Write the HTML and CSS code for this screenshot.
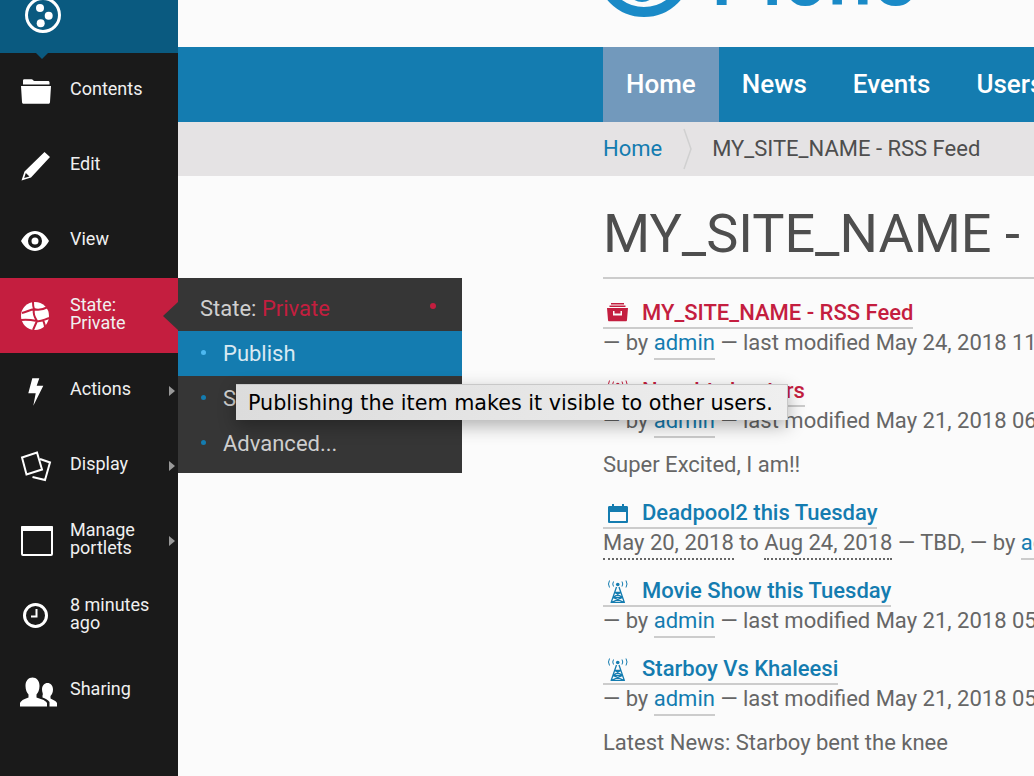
FILE: index.html
```html
<!DOCTYPE html>
<html lang="en">
<head>
    <meta charset="UTF-8">
    <meta name="viewport" content="width=device-width, initial-scale=1.0">
    <title>MY_SITE_NAME - RSS Feed</title>
    <link rel="stylesheet" href="styles.css">
</head>
<body>

<aside class="toolbar">
    <div class="toolbar-logo">
        <svg width="36" height="36" viewBox="0 0 36 36">
            <circle cx="18" cy="15" r="16.500" fill="none" stroke="#fff" stroke-width="3"/>
            <circle cx="15" cy="8" r="4" fill="#fff"/>
            <circle cx="23.700" cy="15.700" r="4" fill="#fff"/>
            <circle cx="15.700" cy="23.300" r="4" fill="#fff"/>
        </svg>
    </div>
    <a class="tool">
        <svg class="tool-icon" viewBox="0 0 32 32"><path d="M3 9.500V5.700C3 4.800 3.700 4.300 4.500 4.300H11.500C12.800 4.300 13.200 6 14.500 6H28C29 6 29.500 6.600 29.500 7.500V9.500ZM1 11H31L30 27C30 28 29.400 28.800 28.300 28.800H3.700C2.600 28.800 2 28 2 27Z" fill="#fff"/></svg>
        <span>Contents</span>
    </a>
    <a class="tool">
        <svg class="tool-icon" viewBox="0 0 32 32"><path d="M24.500 2L30 7L11 27.500L1.500 30.500L4.500 21.500ZM5.800 23L4.200 28L9.500 26.500Z" fill="#fff" fill-rule="evenodd"/></svg>
        <span>Edit</span>
    </a>
    <a class="tool">
        <svg class="tool-icon" viewBox="0 0 32 32"><path d="M1 16C4.500 9.500 9.500 6 15 6S25.500 9.500 29 16C25.500 22.500 20.500 26 15 26S4.500 22.500 1 16ZM15 9A7 7 0 1 0 15 23A7 7 0 1 0 15 9ZM15 12.500A3.500 3.500 0 1 1 15 19.500A3.500 3.500 0 1 1 15 12.500Z" fill="#fff" fill-rule="evenodd"/></svg>
        <span>View</span>
    </a>
    <a class="tool tool-state">
        <svg class="tool-icon" viewBox="0 0 32 32">
            <circle cx="15" cy="16" r="14" fill="#fff"/>
            <path d="M2 13C6 12 10 10 14 9C13 7 13 5 13 2M14 9C19 11 24 9 28 7M14 9C13 13 15 18 17 21M1 20C7 19 12 20 17 21C21 22 25 19 30 18M17 21L13 30M23 20C24 23 25 25 25 27" fill="none" stroke="#c41e3f" stroke-width="2"/>
        </svg>
        <span>State:<br>Private</span>
    </a>
    <a class="tool has-more">
        <svg class="tool-icon" viewBox="0 0 32 32"><path d="M12.300 3.200H19.300L16.700 10.800H23.300L13.300 30.800L15.700 18.200H8.300Z" fill="#fff"/></svg>
        <span>Actions</span>
    </a>
    <a class="tool has-more">
        <svg class="tool-icon" viewBox="0 0 32 32"><path d="M2 7.500L17 2.500L22 19.500L6.500 24.500ZM20 9L30 12.500L25 30L12.500 27" fill="none" stroke="#fff" stroke-width="2"/></svg>
        <span>Display</span>
    </a>
    <a class="tool has-more">
        <svg class="tool-icon" viewBox="0 0 32 32"><rect x="2" y="2" width="30" height="28" rx="1" fill="none" stroke="#fff" stroke-width="2"/><rect x="1" y="1" width="32" height="5" rx="1" fill="#fff"/></svg>
        <span>Manage<br>portlets</span>
    </a>
    <a class="tool">
        <svg class="tool-icon" viewBox="0 0 32 32"><circle cx="15.500" cy="15.500" r="11" fill="none" stroke="#fff" stroke-width="3"/><path d="M16.500 9V16.500H11" fill="none" stroke="#fff" stroke-width="2"/></svg>
        <span>8 minutes<br>ago</span>
    </a>
    <a class="tool">
        <svg class="tool-icon" viewBox="0 0 32 32"><path d="M12.500 2.500C16.500 2.500 19.500 5.500 19.500 11C19.500 15 18 18 16.500 19.500V22.500C20 24 25 24.500 27 28V31.500H0V28C2 24.500 5 24 8.500 22.500V19.500C7 18 5.500 15 5.500 11C5.500 5.500 8.500 2.500 12.500 2.500Z" fill="#fff"/><path d="M27.500 8C30.500 8 33 10.500 33 14.500C33 17.500 32 19.500 30.500 21V23.500C33 25 36 25.500 37 28V31.500H29.500V27C28 24.500 25 23.500 22.500 22.500V20.500C23.500 19 22 17.500 22 14.500C22 10.500 24.500 8 27.500 8Z" fill="#fff"/></svg>
        <span>Sharing</span>
    </a>
</aside>

<div class="submenu">
    <div class="submenu-head">
        <span>State: <em>Private</em></span>
        <i class="head-dot"></i>
    </div>
    <a class="submenu-item active">Publish</a>
    <a class="submenu-item">Send back</a>
    <a class="submenu-item">Advanced...</a>
</div>

<div class="tooltip">Publishing the item makes it visible to other users.</div>

<div class="page">
    <header class="site-head">
        <svg class="plone-logo" width="340" height="100" viewBox="0 0 340 100">
            <circle cx="41" cy="49" r="43" fill="none" stroke="#1a8ac7" stroke-width="10"/>
            <circle cx="39" cy="67" r="15" fill="#1a8ac7"/>
            <text x="108" y="85" class="plone-word">Plone</text>
        </svg>
    </header>
    <nav class="site-nav">
        <a class="nav-link current">Home</a>
        <a class="nav-link">News</a>
        <a class="nav-link">Events</a>
        <a class="nav-link">Users</a>
    </nav>
    <div class="crumbs">
        <a class="crumb-home">Home</a>
        <svg class="crumb-sep" width="10" height="42" viewBox="0 0 10 42"><path d="M1 1L8 21L1 41" fill="none" stroke="#d0d0d0" stroke-width="1.500"/></svg>
        <span class="crumb-text">MY_SITE_NAME - RSS Feed</span>
    </div>
    <main class="content">
        <h1>MY_SITE_NAME - RSS Feed</h1>

        <div class="entry">
            <div class="entry-title private">
                <a><svg class="type-icon" viewBox="0 0 22 23"><path d="M5 1H18V2.500H5ZM3.500 3.500H19.500V5H3.500ZM1 6H22L21 18C21 18.800 20.500 19.300 19.700 19.300H3.300C2.500 19.300 2 18.800 2 18ZM7 9V13.500H16V9H14.500V11.500H8.500V9Z" fill="#c41e3f" fill-rule="evenodd"/></svg>MY_SITE_NAME - RSS Feed</a>
            </div>
            <div class="byline">— by <a>admin</a> — last modified May 24, 2018 11:25 AM</div>
        </div>

        <div class="entry">
            <div class="entry-title private">
                <a><svg class="type-icon" viewBox="0 0 22 23"><use href="#tower"/></svg>Naughty hunters</a>
            </div>
            <div class="byline">— by <a>admin</a> — last modified May 21, 2018 06:10 PM</div>
            <p class="summary">Super Excited, I am!!</p>
        </div>

        <div class="entry">
            <div class="entry-title">
                <a><svg class="type-icon" viewBox="0 0 22 23"><path d="M6 2H8V4H16V2H18V4H20.500C21.500 4 22 4.500 22 5.500V19.500C22 20.500 21.500 21 20.500 21H3.500C2.500 21 2 20.500 2 19.500V5.500C2 4.500 2.500 4 3.500 4H6ZM4 10V19H20V10Z" fill="#147cb0" fill-rule="evenodd"/></svg>Deadpool2 this Tuesday</a>
            </div>
            <div class="byline"><span class="date">May 20, 2018</span> to <span class="date">Aug 24, 2018</span> — TBD, — by <a>admin</a></div>
        </div>

        <div class="entry">
            <div class="entry-title">
                <a><svg class="type-icon" viewBox="0 0 22 23"><use href="#tower"/></svg>Movie Show this Tuesday</a>
            </div>
            <div class="byline">— by <a>admin</a> — last modified May 21, 2018 05:42 PM</div>
        </div>

        <div class="entry">
            <div class="entry-title">
                <a><svg class="type-icon" viewBox="0 0 22 23"><use href="#tower"/></svg>Starboy Vs Khaleesi</a>
            </div>
            <div class="byline">— by <a>admin</a> — last modified May 21, 2018 05:40 PM</div>
            <p class="summary">Latest News: Starboy bent the knee</p>
        </div>
    </main>
</div>

<svg class="defs" width="0" height="0">
    <symbol id="tower" viewBox="0 0 22 23">
        <g fill="none" stroke="currentColor">
            <path stroke-width="1.300" d="M10.500 7L5 23M13 7L18.500 23M8.500 12.500H15M7 17.500H16.500M5 22.500H18.500M9 12.500L16.500 17.500M14.500 12.500L7 17.500M7 17.500L18.500 22.500M16.500 17.500L5 22.500"/>
            <path stroke-width="1" d="M7.500 1.500Q6 4 7.500 6.500M16 1.500Q17.500 4 16 6.500M3.500 .5Q1.500 4 3.500 7.500M20 .5Q22 4 20 7.500"/>
        </g>
        <circle cx="11.750" cy="4.500" r="1.800" fill="currentColor"/>
    </symbol>
</svg>

</body>
</html>
```

FILE: styles.css
```css
html, body {
    margin: 0;
    height: 100%;
    overflow: hidden;
}
body {
    display: flex;
    background: #fbfbfb;
    color: #666;
    font-family: Roboto, "Liberation Sans", sans-serif;
    position: relative;
}
.defs {
    position: absolute;
}

/* toolbar */
.toolbar {
    width: 178px;
    flex: none;
    height: 776px;
    background: #1a1a1a;
}
.toolbar-logo {
    height: 53px;
    background: #0a5a80;
    padding-left: 25px;
    position: relative;
    box-sizing: border-box;
}
.toolbar-logo::after {
    content: "";
    position: absolute;
    left: 36px;
    top: 53px;
    border: 6px solid transparent;
    border-top-color: #0a5a80;
    border-bottom: 0;
}
.tool {
    height: 75px;
    display: flex;
    align-items: center;
    padding-left: 20px;
    color: #f0f0f0;
    font-size: 18px;
    line-height: 18px;
    position: relative;
    box-sizing: border-box;
}
.tool span {
    margin-left: 18px;
    margin-top: -3px;
}
.tool-icon {
    width: 32px;
    height: 32px;
    flex: none;
    overflow: visible;
}
.tool-state {
    background: #c41e3f;
}
.tool-state::after {
    content: "";
    position: absolute;
    right: 0;
    top: 24px;
    border: 14px solid transparent;
    border-right: 15px solid #363636;
    border-left: 0;
}
.has-more::after {
    content: "";
    position: absolute;
    right: 3px;
    top: 33px;
    border: 5.500px solid transparent;
    border-left: 6px solid #999;
    border-right: 0;
}

/* state menu */
.submenu {
    position: absolute;
    left: 178px;
    top: 278px;
    width: 284px;
    height: 195px;
    background: #363636;
    font-size: 22px;
    color: #cfcfcf;
}
.submenu-head {
    height: 53px;
    display: flex;
    justify-content: space-between;
    align-items: center;
    padding: 8px 26px 0 22px;
    box-sizing: border-box;
}
.submenu-head em {
    font-style: normal;
    color: #c41e3f;
}
.head-dot {
    width: 6px;
    height: 6px;
    border-radius: 50%;
    background: #c41e3f;
    margin-bottom: 6px;
}
.submenu-item {
    display: flex;
    align-items: center;
    height: 45px;
    padding-left: 45px;
    position: relative;
}
.submenu-item::before {
    content: "";
    position: absolute;
    left: 23px;
    top: 19px;
    width: 5px;
    height: 5px;
    border-radius: 50%;
    background: #147cb0;
}
.submenu-item.active {
    background: #147cb0;
    color: #d9e9f2;
}
.submenu-item.active::before {
    background: #4db8f0;
}

.tooltip {
    position: absolute;
    left: 236px;
    top: 384px;
    width: 552px;
    height: 36px;
    box-sizing: border-box;
    padding-left: 12px;
    line-height: 36px;
    background: linear-gradient(90deg, #dcdcdc, #efefef);
    color: #000;
    font-family: "DejaVu Sans", sans-serif;
    font-size: 20.700px;
    white-space: nowrap;
    box-shadow: 0 6px 18px rgba(0, 0, 0, 0.3);
    border: 1px solid #c8c8c8;
    border-width: 1px 1px 0 0;
}

/* page */
.page {
    flex: 1;
    min-width: 0;
    overflow: hidden;
}
.site-head {
    height: 47px;
    overflow: hidden;
    padding-left: 425px;
    background: #fbfbfb;
}
.plone-logo {
    display: block;
    margin-top: -80px;
    overflow: visible;
}
.plone-word {
    font-size: 80px;
    font-weight: 500;
    fill: #1a8ac7;
}
.site-nav {
    height: 75px;
    background: #147cb0;
    display: flex;
    padding-left: 425px;
}
.nav-link {
    padding: 0 23px;
    line-height: 75px;
    color: #fff;
    font-size: 26px;
    font-weight: 500;
}
.nav-link.current {
    background: #7299bc;
}
.crumbs {
    height: 54px;
    background: #e5e3e4;
    padding-left: 425px;
    display: flex;
    align-items: center;
    font-size: 22px;
    white-space: nowrap;
    color: #4e4e4e;
}
.crumb-home {
    color: #147cb0;
    margin-top: -2px;
}
.crumb-text {
    margin-top: -2px;
}
.crumb-sep {
    margin: 0 19px 0 21px;
    flex: none;
}
.content {
    padding-left: 425px;
    white-space: nowrap;
}
h1 {
    margin: 0 0 19px;
    padding-top: 26px;
    height: 103px;
    box-sizing: border-box;
    font-size: 54px;
    line-height: 63px;
    font-weight: 400;
    color: #4e4e4e;
    border-bottom: 2px solid #ccc;
}
.entry {
    font-size: 22px;
}
.entry-title {
    line-height: 30px;
    height: 30px;
    font-weight: 500;
    font-size: 22px;
}
.entry-title a {
    display: inline-block;
    height: 29px;
    color: #147cb0;
    border-bottom: 2px solid #ccc;
}
.entry-title.private a {
    color: #c41e3f;
}
.type-icon {
    width: 22px;
    height: 23px;
    margin: 0 14px 0 3px;
    vertical-align: -5px;
}
.byline {
    height: 48px;
    line-height: 30px;
}
.byline a {
    color: #147cb0;
    padding-bottom: 3px;
    border-bottom: 2px solid #ccc;
}
.date {
    padding-bottom: 3px;
    border-bottom: 2px dotted #666;
}
.summary {
    margin: -4px 0 0;
    height: 48px;
    line-height: 30px;
}
```
